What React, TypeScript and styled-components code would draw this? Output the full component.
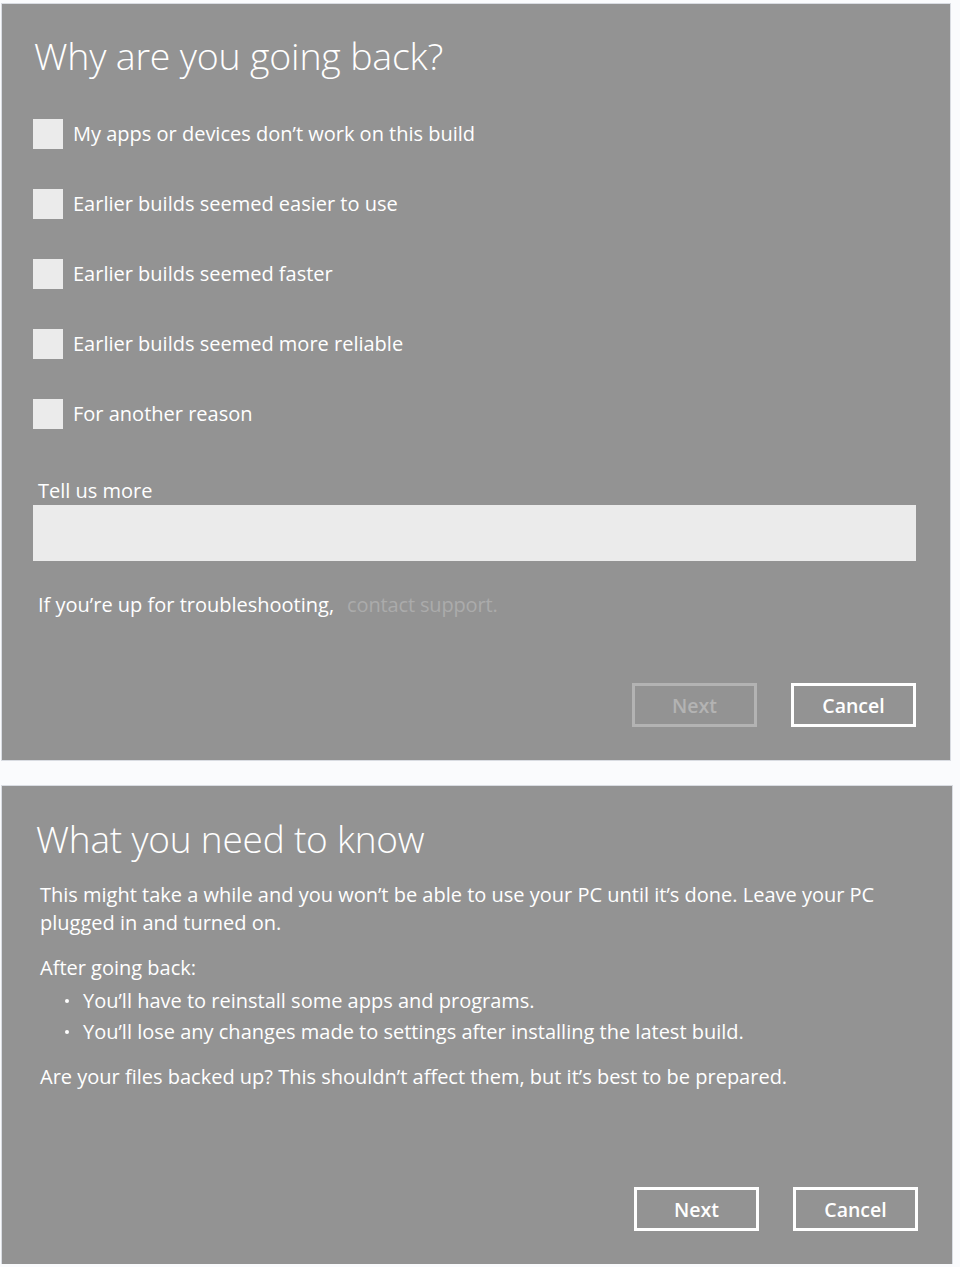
import React from 'react';
import styled, { createGlobalStyle } from 'styled-components';

const panel_grey = '#939393';
const field_grey = '#ebebeb';
const muted_grey = '#ababab';

const GlobalStyle = createGlobalStyle`
  body {
    margin: 0;
    background: #fafbfd;
    font-family: "Open Sans", "Noto Sans", "Liberation Sans", sans-serif;
    color: #ffffff;
  }
`;

const reasons = [
  'My apps or devices don’t work on this build',
  'Earlier builds seemed easier to use',
  'Earlier builds seemed faster',
  'Earlier builds seemed more reliable',
  'For another reason',
];

export default function App() {
  return (
    <>
      <GlobalStyle />
      <Page>
        <Panel $width={948} $height={756}>
          <Title>Why are you going back?</Title>
          <Reasons>
            {reasons.map((r) => (
              <Reason key={r}>
                <Box />
                <ReasonText>{r}</ReasonText>
              </Reason>
            ))}
          </Reasons>
          <FieldLabel>Tell us more</FieldLabel>
          <Field />
          <Support>
            If you’re up for troubleshooting,<SupportLink>contact support.</SupportLink>
          </Support>
          <Buttons>
            <Button $disabled>Next</Button>
            <Button>Cancel</Button>
          </Buttons>
        </Panel>

        <Panel $width={950} $height={478}>
          <Title $second>What you need to know</Title>
          <Body>
            <Para>
              This might take a while and you won’t be able to use your PC until it’s done. Leave
              your PC plugged in and turned on.
            </Para>
            <Para>After going back:</Para>
            <Bullets>
              <li>You’ll have to reinstall some apps and programs.</li>
              <li>You’ll lose any changes made to settings after installing the latest build.</li>
            </Bullets>
            <Para>Are your files backed up? This shouldn’t affect them, but it’s best to be prepared.</Para>
          </Body>
          <Buttons>
            <Button>Next</Button>
            <Button>Cancel</Button>
          </Buttons>
        </Panel>
      </Page>
    </>
  );
}

const Page = styled.div`
  display: flex;
  flex-direction: column;
  gap: 26px;
  padding: 4px 0 0 2px;
`;

const Panel = styled.div<{ $width: number; $height: number }>`
  box-sizing: border-box;
  width: ${(p) => p.$width}px;
  height: ${(p) => p.$height}px;
  background: ${panel_grey};
  display: flex;
  flex-direction: column;
  padding: 0 34px 33px 31px;
  box-shadow: 0 0 0 1px #d9dce2;
`;

const Title = styled.h1<{ $second?: boolean }>`
  margin: ${(p) => (p.$second ? '28px 0 0 3px' : '27px 0 0 1px')};
  font-size: ${(p) => (p.$second ? '37px' : '37.5px')};
  font-weight: 300;
  line-height: 50px;
  letter-spacing: -0.2px;
`;

const Reasons = styled.div`
  display: flex;
  flex-direction: column;
  gap: 40px;
  margin-top: 38px;
`;

const Reason = styled.div`
  display: flex;
  align-items: center;
  gap: 10px;
  height: 30px;
`;

const Box = styled.div`
  width: 30px;
  height: 30px;
  background: ${field_grey};
`;

const ReasonText = styled.span`
  font-size: 20px;
  line-height: 30px;
`;

const FieldLabel = styled.div`
  margin: 49px 0 0 5px;
  font-size: 20px;
  line-height: 26px;
`;

const Field = styled.div`
  margin-top: 1px;
  height: 56px;
  background: ${field_grey};
`;

const Support = styled.div`
  margin: 31px 0 0 5px;
  font-size: 20px;
  line-height: 26px;
`;

const SupportLink = styled.span`
  margin-left: 13px;
  color: ${muted_grey};
  letter-spacing: -0.15px;
`;

const Buttons = styled.div`
  margin-top: auto;
  display: flex;
  justify-content: flex-end;
  gap: 34px;
`;

const Button = styled.div<{ $disabled?: boolean }>`
  box-sizing: border-box;
  width: 125px;
  height: 44px;
  display: flex;
  align-items: center;
  justify-content: center;
  border: 3px solid ${(p) => (p.$disabled ? '#b3b3b3' : '#ffffff')};
  color: ${(p) => (p.$disabled ? '#b3b3b3' : '#ffffff')};
  font-size: 19.5px;
  font-weight: 600;
`;

const Body = styled.div`
  margin: 17px 0 0 7px;
  font-size: 20px;
  line-height: 28px;
`;

const Para = styled.p`
  margin: 0 0 17px;
`;

const Bullets = styled.ul`
  list-style: none;
  margin: -14px 0 16px;
  padding-left: 43px;
  line-height: 31px;

  li {
    position: relative;
  }

  li::before {
    content: '';
    position: absolute;
    left: -18px;
    top: 14px;
    width: 4px;
    height: 4px;
    border-radius: 50%;
    background: #ffffff;
  }
`;
